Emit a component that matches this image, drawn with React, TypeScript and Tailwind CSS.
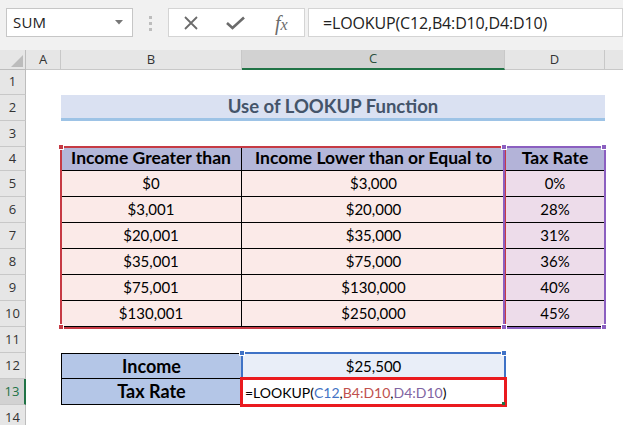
import React from "react";

function RH({ n, h, active = false }: { n: number; h: string; active?: boolean }) {
  return (
    <div
      className={`${h} w-[26px] shrink-0 flex items-center justify-center text-[13px] border-b border-b-[#c8c8c8] font-['Open_Sans',sans-serif] ${
        active
          ? "bg-[#d2d2d2] text-[#217346] border-r-2 border-r-[#217346]"
          : "bg-[#e6e6e6] text-[#333] border-r border-r-[#bdbdbd]"
      }`}
    >
      {n}
    </div>
  );
}

function Row({ h, n, active = false, children }: { h: string; n: number; active?: boolean; children?: React.ReactNode }) {
  return (
    <div className={`flex ${h}`}>
      <RH n={n} h={h} active={active} />
      <div className="w-[35px] shrink-0" />
      {children}
    </div>
  );
}

const data: [string, string, string][] = [
  ["$0", "$3,000", "0%"],
  ["$3,001", "$20,000", "28%"],
  ["$20,001", "$35,000", "31%"],
  ["$35,001", "$75,000", "36%"],
  ["$75,001", "$130,000", "40%"],
  ["$130,001", "$250,000", "45%"],
];

function Handle({ cls }: { cls: string }) {
  return <div className={`absolute w-[6px] h-[6px] border border-white ${cls}`} />;
}

export default function App() {
  return (
    <div className="relative w-[623px] h-[425px] overflow-hidden bg-white font-['Lato',sans-serif] text-black">
      {/* Formula bar */}
      <div className="h-[50px] bg-[#f1f1f1] flex items-start pt-[8px]">
        <div className="ml-[6px] w-[127px] h-[29px] bg-white border border-[#c6c6c6] flex items-center justify-between pl-[6px] pr-[9px]">
          <span className="text-[15px] text-[#222] font-['Open_Sans',sans-serif] tracking-[0.2px]">SUM</span>
          <svg width="8" height="5" viewBox="0 0 8 5">
            <path d="M0 0 L8 0 L4 4.5 Z" fill="#777" />
          </svg>
        </div>
        <div className="ml-[16px] mt-[8px] flex flex-col gap-[3px]">
          <div className="w-[3px] h-[3px] bg-[#bdbdbd]" />
          <div className="w-[3px] h-[3px] bg-[#bdbdbd]" />
          <div className="w-[3px] h-[3px] bg-[#bdbdbd]" />
        </div>
        <div className="ml-[16px] w-[137px] h-[29px] bg-white border border-[#d4d4d4] flex items-center">
          <svg className="ml-[14px]" width="16" height="14" viewBox="0 0 16 14">
            <path d="M2 1 L14 13 M14 1 L2 13" stroke="#6b6b6b" strokeWidth="1.8" />
          </svg>
          <svg className="ml-[27px]" width="19" height="14" viewBox="0 0 19 14">
            <path d="M1 7 L6.5 12 L18 1.5" stroke="#6b6b6b" strokeWidth="2.6" fill="none" />
          </svg>
          <span className="ml-[30px] text-[20px] italic text-[#6b6b6b] font-['Liberation_Serif',serif] leading-none">
            f<span className="text-[16px]">x</span>
          </span>
        </div>
        <div className="ml-[3px] flex-1 h-[29px] bg-white border border-[#d4d4d4] flex items-center pl-[14px]">
          <span className="text-[16px] text-[#222] font-['Open_Sans',sans-serif] tracking-[-0.15px]">=LOOKUP(C12,B4:D10,D4:D10)</span>
        </div>
      </div>

      {/* Column headers */}
      <div className="flex h-[20px] font-['Open_Sans',sans-serif] text-[13px] text-[#333]">
        <div className="w-[26px] shrink-0 bg-[#e6e6e6] border-r border-b border-[#bdbdbd] relative">
          <svg className="absolute right-[2px] bottom-[2px]" width="12" height="12" viewBox="0 0 12 12">
            <path d="M12 0 L12 12 L0 12 Z" fill="#bcbcbc" />
          </svg>
        </div>
        <div className="w-[35px] shrink-0 bg-[#e6e6e6] border-r border-b border-[#c8c8c8] flex items-center justify-center">A</div>
        <div className="w-[181px] shrink-0 bg-[#e6e6e6] border-r border-b border-[#c8c8c8] flex items-center justify-center">B</div>
        <div className="w-[263px] shrink-0 bg-[#d2d2d2] border-r border-r-[#c8c8c8] border-b-2 border-b-[#217346] flex items-center justify-center text-[#2b4f3c]">C</div>
        <div className="w-[100px] shrink-0 bg-[#e6e6e6] border-r border-b border-[#c8c8c8] flex items-center justify-center">D</div>
        <div className="flex-1 bg-[#e6e6e6] border-b border-[#c8c8c8]" />
      </div>

      {/* Rows */}
      <Row h="h-[25px]" n={1} />
      <Row h="h-[26px]" n={2}>
        <div className="w-[544px] shrink-0 bg-[#dae1f2] border-b-[3px] border-[#9dc3e6] flex items-center justify-center">
          <span className="text-[18.5px] font-bold text-[#44546a]">Use of LOOKUP Function</span>
        </div>
      </Row>
      <Row h="h-[26px]" n={3} />
      <Row h="h-[24px]" n={4}>
        <div className="w-[181px] shrink-0 bg-[#b4b7d9] border-r border-b border-black flex items-center justify-center text-[17.5px] font-bold">
          Income Greater than
        </div>
        <div className="w-[263px] shrink-0 bg-[#b4b7d9] border-b border-black flex items-center justify-center text-[17.5px] font-bold">
          Income Lower than or Equal to
        </div>
        <div className="w-[100px] shrink-0 bg-[#b3b3d8] border-b border-black flex items-center justify-center text-[17.5px] font-bold">
          Tax Rate
        </div>
      </Row>
      {data.map((r, i) => (
        <Row key={i} h="h-[26px]" n={5 + i}>
          <div className="w-[181px] shrink-0 bg-[#fbeae8] border-r border-b border-black flex items-center justify-center text-[15px]">
            {r[0]}
          </div>
          <div className="w-[263px] shrink-0 bg-[#fbeae8] border-b border-black flex items-center justify-center text-[15px]">
            {r[1]}
          </div>
          <div className="w-[100px] shrink-0 bg-[#eddcea] border-b border-black flex items-center justify-center text-[15px]">
            {r[2]}
          </div>
        </Row>
      ))}
      <Row h="h-[26px]" n={11} />
      <Row h="h-[26px]" n={12}>
        <div className="w-[181px] shrink-0 bg-[#b4c6e7] border border-black flex items-center justify-center text-[18px] font-bold">
          Income
        </div>
        <div className="w-[263px] shrink-0 bg-[#e9eef8] flex items-center justify-center text-[15px]">$25,500</div>
      </Row>
      <Row h="h-[26px]" n={13} active>
        <div className="w-[181px] shrink-0 bg-[#b4c6e7] border-x border-b border-black flex items-center justify-center text-[18px] font-bold">
          Tax Rate
        </div>
        <div className="w-[263px] shrink-0 bg-white flex items-center pl-[3px] text-[14px]">
          <span>=LOOKUP(</span>
          <span className="text-[#4472c4]">C12</span>
          <span>,</span>
          <span className="text-[#c0504d]">B4:D10</span>
          <span>,</span>
          <span className="text-[#8064a2]">D4:D10</span>
          <span>)</span>
        </div>
      </Row>
      <Row h="h-[26px]" n={14} />

      {/* Selection overlays */}
      <div className="absolute left-[60px] top-[146px] w-[446px] h-[183px] border-2 border-[#c63a44]" />
      <Handle cls="left-[58px] top-[144px] bg-[#c63a44]" />
      <Handle cls="left-[58px] top-[324px] bg-[#c63a44]" />
      <div className="absolute left-[503px] top-[146px] w-[103px] h-[183px] border-2 border-[#8b5fc0]" />
      <Handle cls="left-[501px] top-[144px] bg-[#8b5fc0]" />
      <Handle cls="left-[601px] top-[144px] bg-[#8b5fc0]" />
      <Handle cls="left-[501px] top-[324px] bg-[#8b5fc0]" />
      <Handle cls="left-[601px] top-[324px] bg-[#8b5fc0]" />

      <div className="absolute left-[241px] top-[352px] w-[265px] h-[28px] border-2 border-[#3f72c6]" />
      <Handle cls="left-[239px] top-[350px] bg-[#3f72c6]" />
      <Handle cls="left-[501px] top-[350px] bg-[#3f72c6]" />

      <div className="absolute left-[240px] top-[377px] w-[267px] h-[30px] border-[3px] border-[#ea1a1f]" />
      <div className="absolute left-[502px] top-[402px] w-[3px] h-[3px] bg-[#217346]" />
    </div>
  );
}
